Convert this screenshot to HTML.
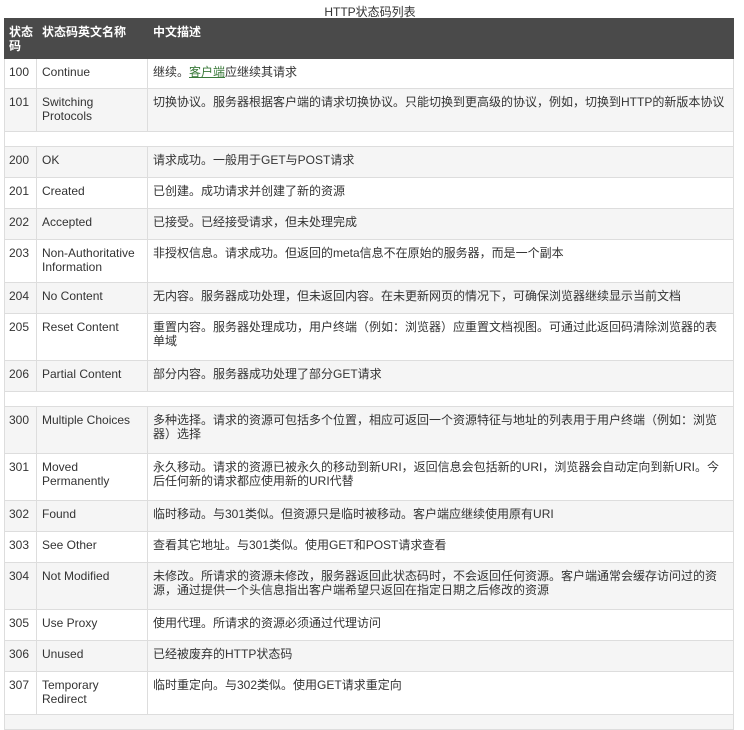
<!DOCTYPE html>
<html><head><meta charset="utf-8"><style>
body{margin:0;background:#fff;font-family:"Liberation Sans","Noto Sans CJK SC",sans-serif;font-size:12px;color:#333;}
.cap{position:absolute;top:3px;left:0;width:740px;text-align:center;font-size:12px;color:#333;}
table{position:absolute;left:4px;top:18px;width:730px;border-collapse:collapse;table-layout:fixed;}
td,th{border:1px solid #ddd;vertical-align:top;padding:6px 5px 0 5px;line-height:14px;text-align:left;}
td:first-child,th:first-child{padding-left:4px;padding-right:2px;}
th{background:#4a4a4a;color:#fff;border-color:#4a4a4a;font-weight:bold;padding-top:6px;}
tr.g td{background:#f5f5f5;}
a{color:#3a7a3a;text-decoration:underline;}
</style></head><body>
<div class="cap">HTTP状态码列表</div>
<table>
<colgroup><col style="width:32px"><col style="width:111px"><col></colgroup>
<tr style="height:40px"><th>状态码</th><th>状态码英文名称</th><th>中文描述</th></tr>
<tr style="height:30px"><td>100</td><td>Continue</td><td>继续。<a>客户端</a>应继续其请求</td></tr>
<tr class="g" style="height:43px"><td>101</td><td>Switching Protocols</td><td>切换协议。服务器根据客户端的请求切换协议。只能切换到更高级的协议，例如，切换到HTTP的新版本协议</td></tr>
<tr style="height:15px"><td colspan="3" style="padding:0"></td></tr>
<tr class="g" style="height:31px"><td>200</td><td>OK</td><td>请求成功。一般用于GET与POST请求</td></tr>
<tr style="height:31px"><td>201</td><td>Created</td><td>已创建。成功请求并创建了新的资源</td></tr>
<tr class="g" style="height:31px"><td>202</td><td>Accepted</td><td>已接受。已经接受请求，但未处理完成</td></tr>
<tr style="height:43px"><td>203</td><td>Non-Authoritative Information</td><td>非授权信息。请求成功。但返回的meta信息不在原始的服务器，而是一个副本</td></tr>
<tr class="g" style="height:31px"><td>204</td><td>No Content</td><td>无内容。服务器成功处理，但未返回内容。在未更新网页的情况下，可确保浏览器继续显示当前文档</td></tr>
<tr style="height:47px"><td>205</td><td>Reset Content</td><td>重置内容。服务器处理成功，用户终端（例如：浏览器）应重置文档视图。可通过此返回码清除浏览器的表单域</td></tr>
<tr class="g" style="height:31px"><td>206</td><td>Partial Content</td><td>部分内容。服务器成功处理了部分GET请求</td></tr>
<tr style="height:15px"><td colspan="3" style="padding:0"></td></tr>
<tr class="g" style="height:47px"><td>300</td><td>Multiple Choices</td><td>多种选择。请求的资源可包括多个位置，相应可返回一个资源特征与地址的列表用于用户终端（例如：浏览器）选择</td></tr>
<tr style="height:47px"><td>301</td><td>Moved Permanently</td><td>永久移动。请求的资源已被永久的移动到新URI，返回信息会包括新的URI，浏览器会自动定向到新URI。今后任何新的请求都应使用新的URI代替</td></tr>
<tr class="g" style="height:31px"><td>302</td><td>Found</td><td>临时移动。与301类似。但资源只是临时被移动。客户端应继续使用原有URI</td></tr>
<tr style="height:31px"><td>303</td><td>See Other</td><td>查看其它地址。与301类似。使用GET和POST请求查看</td></tr>
<tr class="g" style="height:47px"><td>304</td><td>Not Modified</td><td>未修改。所请求的资源未修改，服务器返回此状态码时，不会返回任何资源。客户端通常会缓存访问过的资源，通过提供一个头信息指出客户端希望只返回在指定日期之后修改的资源</td></tr>
<tr style="height:31px"><td>305</td><td>Use Proxy</td><td>使用代理。所请求的资源必须通过代理访问</td></tr>
<tr class="g" style="height:31px"><td>306</td><td>Unused</td><td>已经被废弃的HTTP状态码</td></tr>
<tr style="height:43px"><td>307</td><td>Temporary Redirect</td><td>临时重定向。与302类似。使用GET请求重定向</td></tr>
<tr class="g" style="height:15px"><td colspan="3" style="padding:0"></td></tr>
</table>
</body></html>
